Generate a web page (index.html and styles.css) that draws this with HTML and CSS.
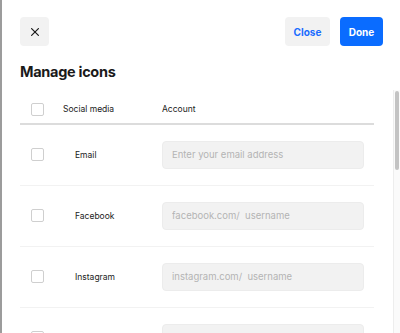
FILE: index.html
```html
<!DOCTYPE html>
<html>
<head>
<meta charset="utf-8">
<link rel="stylesheet" href="styles.css">
</head>
<body>
<div class="modal">
  <div class="topbar">
    <button class="icon-btn" aria-label="Close">
      <svg width="8" height="8" viewBox="0 0 8 8"><path d="M0.6 0.6L7.4 7.4M7.4 0.6L0.6 7.4" stroke="#1a1a1a" stroke-width="1.2" stroke-linecap="round"/></svg>
    </button>
    <div class="actions">
      <button class="btn btn-secondary">Close</button>
      <button class="btn btn-primary">Done</button>
    </div>
  </div>
  <h1 class="title">Manage icons</h1>
  <div class="scroll">
    <div class="table">
      <div class="thead">
        <span class="check"></span>
        <span class="th-media">Social media</span>
        <span class="th-account">Account</span>
      </div>
      <div class="row"><span class="check"></span><span class="name">Email</span><input class="field" placeholder="Enter your email address"></div>
      <div class="row"><span class="check"></span><span class="name">Facebook</span><input class="field" placeholder="facebook.com/  username"></div>
      <div class="row"><span class="check"></span><span class="name">Instagram</span><input class="field" placeholder="instagram.com/  username"></div>
      <div class="row"><span class="check"></span><span class="name">Twitter</span><input class="field" placeholder="twitter.com/  username"></div>
      <div class="row"><span class="check"></span><span class="name">LinkedIn</span><input class="field" placeholder="linkedin.com/in/  username"></div>
    </div>
    <div class="scrollbar"><div class="thumb"></div></div>
  </div>
</div>
</body>
</html>
```
FILE: styles.css
```css
* { box-sizing: border-box; }
html, body { margin: 0; padding: 0; background: #fff; }
body {
  font-family: Inter, "Noto Sans", sans-serif;
  color: #1a1a1a;
  overflow: hidden;
}
.modal {
  height: 333px;
  width: 400px;
  border-left: 2px solid #9c9c9c;
  display: flex;
  flex-direction: column;
}
.topbar {
  display: flex;
  justify-content: space-between;
  align-items: center;
  padding: 17px 17px 0 18px;
}
.icon-btn {
  width: 29px;
  height: 29px;
  border: none;
  border-radius: 4px;
  background: #f2f2f2;
  display: flex;
  align-items: center;
  justify-content: center;
  padding: 0;
}
.actions { display: flex; gap: 10px; }
.btn {
  height: 29px;
  border: none;
  border-radius: 4px;
  font-family: Inter, sans-serif;
  font-weight: 700;
  font-size: 10px;
  padding: 0 8px;
}
.btn-secondary { background: #f2f2f2; color: #1a6dff; width: 45px; }
.btn-primary { background: #0a6cff; color: #fff; width: 43px; }
.title {
  margin: 16px 0 0 18px;
  font-size: 14.5px;
  font-weight: 700;
  line-height: 20px;
  letter-spacing: -0.3px;
}
.scroll {
  position: relative;
  flex: 1;
  margin-top: 8px;
  overflow: hidden;
}
.scrollbar {
  position: absolute;
  top: 0;
  right: 0;
  bottom: 0;
  width: 7px;
  background: #fafafa;
  border-left: 1px solid #ededed;
}
.thumb {
  margin: 1px 1px 0 1px;
  height: 79px;
  background: #c3c3c3;
  border-radius: 3px;
}
.table { margin: 0 26px 0 18px; }
.thead {
  display: flex;
  align-items: center;
  height: 35px;
  border-bottom: 2px solid #dcdcdc;
  font-size: 8.5px;
  font-weight: 400;
  color: #222;
  padding-top: 5px;
}
.check {
  width: 13px;
  height: 13px;
  border: 1px solid #cfcfcf;
  border-radius: 2px;
  margin-left: 11px;
  flex: none;
  background: #fff;
}
.th-media { margin-left: 19px; width: 99px; }
.row {
  display: flex;
  align-items: center;
  height: 61px;
  border-bottom: 1px solid #f2f2f2;
  font-size: 8.5px;
  font-weight: 400;
  color: #222;
  padding-bottom: 1px;
}
.name { margin-left: 31px; width: 87px; flex: none; }
.field {
  width: 202px;
  flex: none;
  height: 28px;
  border: 1px solid #ececec;
  border-radius: 4px;
  background: #f2f2f2;
  padding: 0 9px;
  font-family: Inter, sans-serif;
  font-size: 9.5px;
  color: #333;
  outline: none;
}
.field::placeholder { color: #b4b4b4; }
```
